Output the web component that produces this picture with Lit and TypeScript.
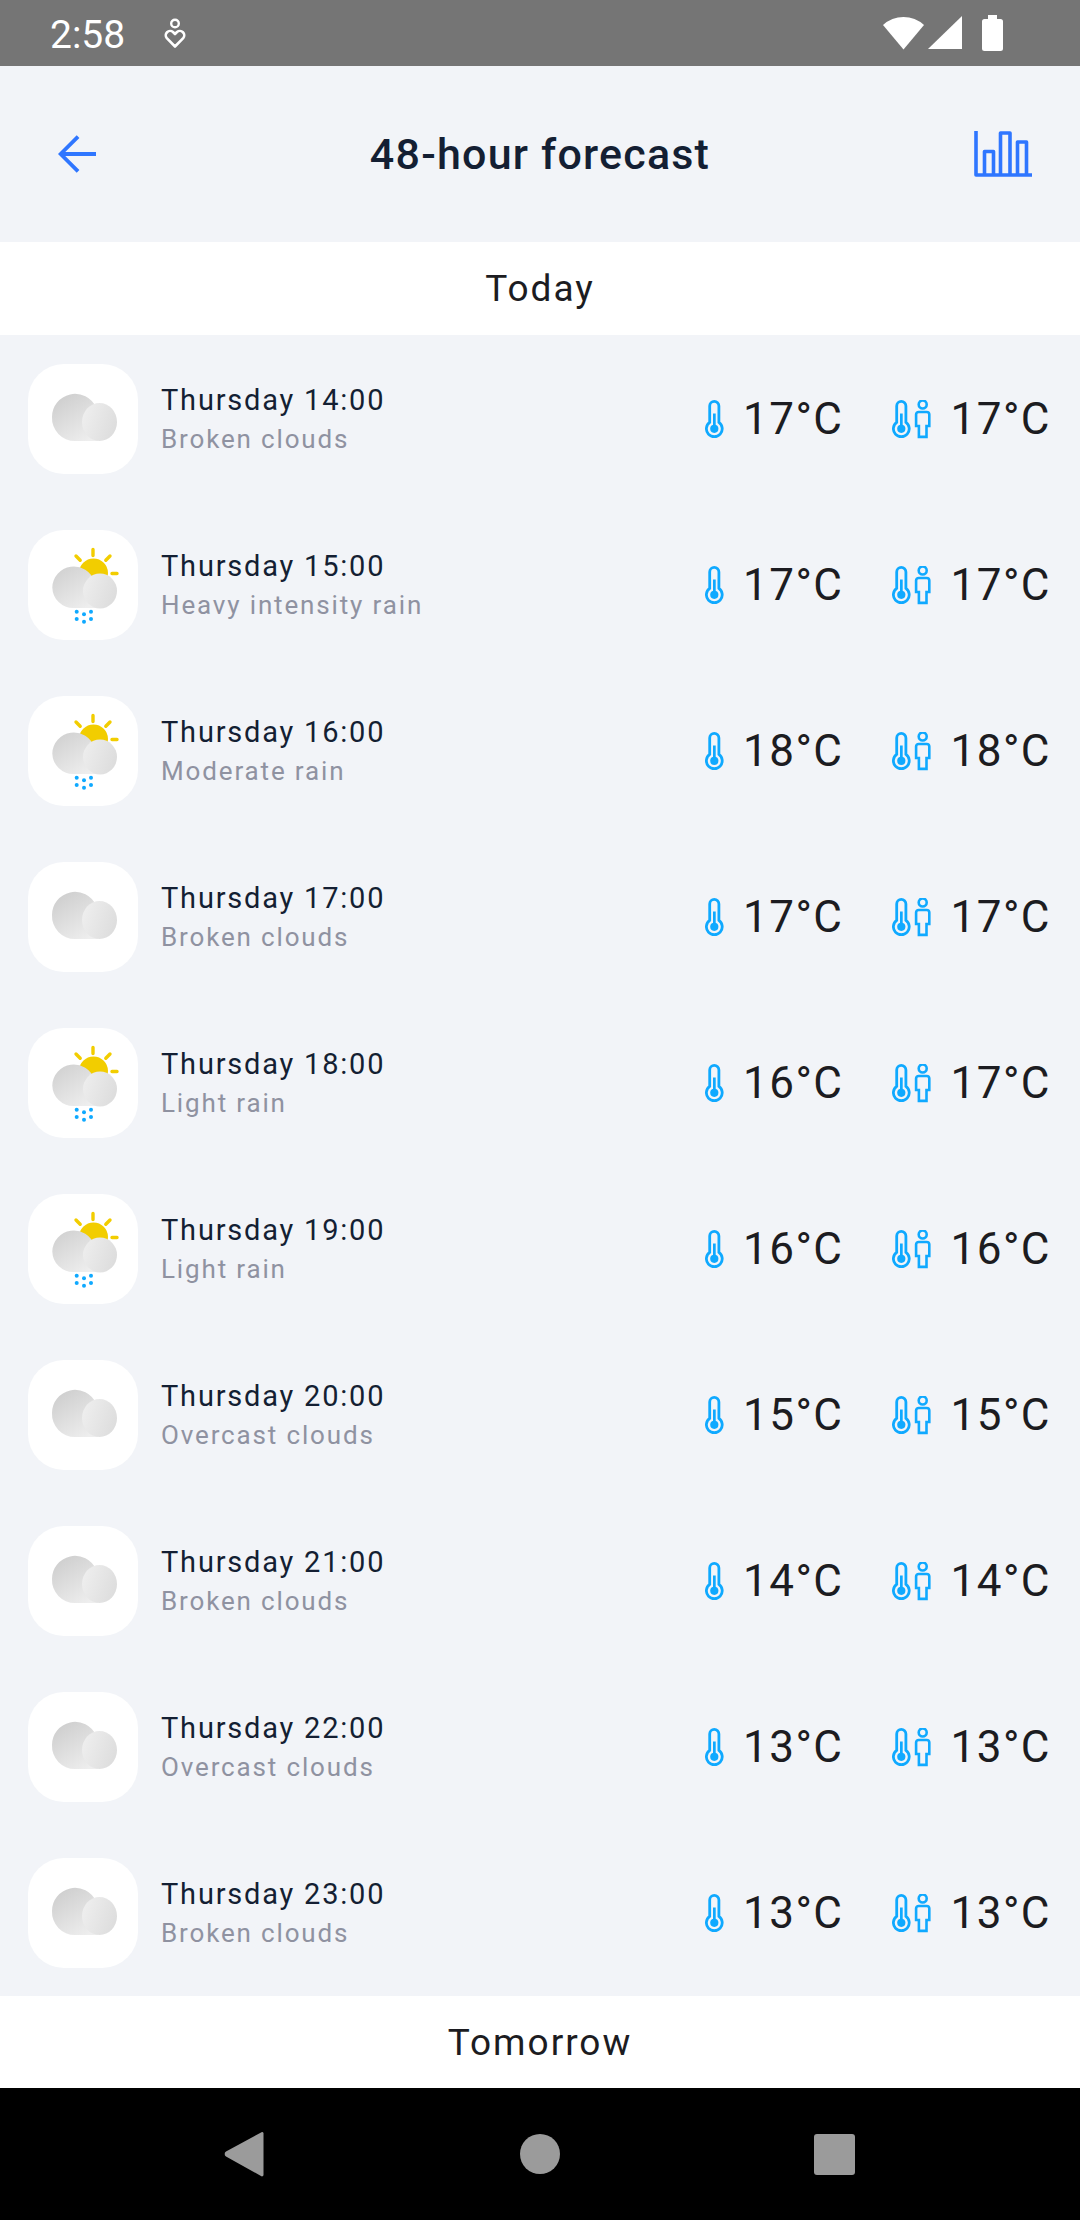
import { css, html, svg, LitElement } from 'lit';
import { customElement } from 'lit/decorators.js';

type Hour = {
  time: string;
  label: string;
  temp: number;
  feels: number;
  rain?: boolean;
};

const HOURS: Hour[] = [
  { time: '14:00', label: 'Broken clouds', temp: 17, feels: 17 },
  { time: '15:00', label: 'Heavy intensity rain', temp: 17, feels: 17, rain: true },
  { time: '16:00', label: 'Moderate rain', temp: 18, feels: 18, rain: true },
  { time: '17:00', label: 'Broken clouds', temp: 17, feels: 17 },
  { time: '18:00', label: 'Light rain', temp: 16, feels: 17, rain: true },
  { time: '19:00', label: 'Light rain', temp: 16, feels: 16, rain: true },
  { time: '20:00', label: 'Overcast clouds', temp: 15, feels: 15 },
  { time: '21:00', label: 'Broken clouds', temp: 14, feels: 14 },
  { time: '22:00', label: 'Overcast clouds', temp: 13, feels: 13 },
  { time: '23:00', label: 'Broken clouds', temp: 13, feels: 13 },
];

const cloudIcon = html`<svg class="weather" viewBox="0 0 110 110">
  <defs>
    <linearGradient id="cloud-a" gradientUnits="userSpaceOnUse" x1="30" y1="35" x2="58" y2="78">
      <stop offset="0" stop-color="#cfcfcf" />
      <stop offset="1" stop-color="#eeeeee" />
    </linearGradient>
    <linearGradient id="cloud-b" gradientUnits="userSpaceOnUse" x1="55" y1="50" x2="89" y2="62">
      <stop offset="0" stop-color="#eeeeee" />
      <stop offset="1" stop-color="#dddddd" />
    </linearGradient>
  </defs>
  <path
    fill="url(#cloud-a)"
    d="M24 53a23 23 0 0 1 44-9.500h2v33.500H47a23 23 0 0 1-23-24z"
  />
  <ellipse cx="71.500" cy="58" rx="17.500" ry="19" fill="url(#cloud-b)" />
</svg>`;

const rainIcon = html`<svg class="weather" viewBox="0 0 110 110">
  <g stroke="#f2cd00" stroke-width="3.400" stroke-linecap="round">
    <path d="M65 19.500v6M48 26l4.200 4.200M82 26l-4.200 4.200M84 43.500h5" />
  </g>
  <circle cx="65.500" cy="43" r="14.500" fill="#f2cd00" />
  <path
    fill="url(#cloud-a)"
    d="M24.300 57.500a21.500 21.500 0 0 1 42-6h4v26.500H45.300a21 21 0 0 1-21-20.500z"
  />
  <ellipse cx="72" cy="61" rx="17" ry="17.500" fill="url(#cloud-b)" />
  <g fill="#0fa9ff">
    <circle cx="48.700" cy="81.700" r="2" />
    <circle cx="48.700" cy="89" r="2" />
    <circle cx="56" cy="84.300" r="2" />
    <circle cx="56" cy="91.700" r="2" />
    <circle cx="63" cy="81.700" r="2" />
    <circle cx="63" cy="89" r="2" />
  </g>
</svg>`;

const thermoPaths = svg`
  <path
    fill="none"
    stroke="#0fa9ff"
    stroke-width="2.800"
    d="M4.700 22.400V6a4.600 4.600 0 0 1 9.200 0v16.400a7.900 7.900 0 1 1-9.200 0z"
  />
  <rect x="8" y="13.500" width="2.700" height="15" fill="#0fa9ff" />
  <circle cx="9.300" cy="28.800" r="4.100" fill="#0fa9ff" />
`;

const thermoIcon = html`<svg class="thermo" viewBox="0 0 19 39">
  ${thermoPaths}
</svg>`;

const feelsIcon = html`<svg class="feels" viewBox="0 0 39 39">
  ${thermoPaths}
  <circle cx="30.700" cy="4.500" r="4" fill="none" stroke="#0fa9ff" stroke-width="2.600" />
  <path
    fill="none"
    stroke="#0fa9ff"
    stroke-width="2.600"
    d="M26.700 12h8a2.600 2.600 0 0 1 2.600 2.600v11.400h-2.800v10.900h-7.600V26h-2.800V14.600a2.600 2.600 0 0 1 2.600-2.600z"
  />
</svg>`;

@customElement('app-root')
export class AppRoot extends LitElement {
  static styles = css`
    :host {
      background: #f2f4f8;
      display: flex;
      flex-direction: column;
      font-family: Roboto, 'Noto Sans', sans-serif;
      height: 2220px;
      overflow: hidden;
    }

    .status-bar {
      align-items: center;
      background: #757575;
      color: #fff;
      display: flex;
      flex: none;
      font-size: 39px;
      height: 66px;
      padding: 0 0 0 50px;
    }

    .status-bar .time {
      line-height: 66px;
      padding-top: 3px;
      width: 114px;
    }

    .status-bar .right {
      display: flex;
      margin-left: auto;
    }

    .status-bar svg {
      display: block;
    }

    .header {
      align-items: center;
      display: grid;
      flex: none;
      grid-template-columns: 1fr auto 1fr;
      height: 176px;
      padding: 0 48px;
    }

    .header svg {
      display: block;
    }

    .header .back {
      margin-left: 10px;
    }

    .header .chart {
      justify-self: end;
    }

    h1 {
      color: #141f33;
      font-size: 43px;
      font-weight: 500;
      letter-spacing: 1.200px;
      margin: 0;
    }

    .section {
      align-items: center;
      background: #fff;
      color: #1c1c21;
      display: flex;
      flex: none;
      font-size: 37px;
      height: 93px;
      justify-content: center;
      letter-spacing: 2px;
    }

    .section.last {
      height: 92px;
    }

    .list {
      display: flex;
      flex: none;
      flex-direction: column;
      gap: 56px;
      padding: 29px 0 28px;
    }

    .row {
      align-items: center;
      display: flex;
      height: 110px;
      padding: 0 29px 0 28px;
    }

    .tile {
      background: #fff;
      border-radius: 36px;
      flex: none;
      height: 110px;
      width: 110px;
    }

    .weather {
      display: block;
      height: 110px;
      width: 110px;
    }

    .text {
      display: flex;
      flex: 1;
      flex-direction: column;
      gap: 4px;
      margin-left: 23px;
      padding-top: 1px;
    }

    .when {
      color: #141f33;
      font-size: 29px;
      letter-spacing: 1.800px;
      line-height: 36px;
    }

    .what {
      color: #8f92a1;
      font-size: 26px;
      letter-spacing: 1.850px;
      line-height: 36px;
      margin-top: -1px;
    }

    .temp {
      align-items: center;
      color: #1c1c21;
      display: flex;
      font-size: 44px;
      letter-spacing: 1.500px;
    }

    .temp svg {
      display: block;
      flex: none;
    }

    .thermo {
      height: 39px;
      margin-right: 19px;
      width: 19px;
    }

    .feels {
      height: 39px;
      margin-left: 49px;
      margin-right: 19px;
      width: 39px;
    }

    .nav {
      align-items: center;
      background: #000;
      display: flex;
      flex: none;
      height: 132px;
      justify-content: center;
    }

    .nav svg {
      display: block;
    }
  `;

  renderRow(hour: Hour) {
    return html`<div class="row">
      <div class="tile">${hour.rain ? rainIcon : cloudIcon}</div>
      <div class="text">
        <div class="when">Thursday ${hour.time}</div>
        <div class="what">${hour.label}</div>
      </div>
      <div class="temp">${thermoIcon}<span>${hour.temp}°C</span></div>
      <div class="temp">${feelsIcon}<span>${hour.feels}°C</span></div>
    </div>`;
  }

  render() {
    return html`
      <div class="status-bar">
        <span class="time">2:58</span>
        <svg width="22" height="32" viewBox="0 0 22 32">
          <circle cx="11" cy="6.500" r="3.800" fill="none" stroke="#fff" stroke-width="2.400" />
          <path
            fill="none"
            stroke="#fff"
            stroke-width="2.600"
            stroke-linejoin="round"
            d="M11 29.500 2.800 21.200a4.400 4.400 0 0 1 6.200-6.200l2 2 2-2a4.400 4.400 0 0 1 6.200 6.200z"
          />
        </svg>
        <svg class="right" width="197" height="66" viewBox="883 0 197 66">
          <path fill="#fff" d="M883 25a30 30 0 0 1 41 0l-20.500 24.500z" />
          <path fill="#fff" d="M962 16v33h-34z" />
          <path
            fill="#fff"
            d="M988 15h9v4h3.500a2.500 2.500 0 0 1 2.500 2.500v27a2.500 2.500 0 0 1-2.500 2.500h-16a2.500 2.500 0 0 1-2.500-2.500v-27a2.500 2.500 0 0 1 2.500-2.500h3.500z"
          />
        </svg>
      </div>

      <div class="header">
        <svg class="back" width="38" height="38" viewBox="0 0 36 36">
          <path
            fill="none"
            stroke="#2f76ff"
            stroke-width="3.600"
            d="M36 18H3M19 1.500 2.500 18 19 34.500"
          />
        </svg>
        <h1>48-hour forecast</h1>
        <svg class="chart" width="58" height="46" viewBox="0 0 58 46">
          <path
            fill="none"
            stroke="#2f76ff"
            stroke-width="3.600"
            stroke-linejoin="round"
            d="M2 0v44h56M10.500 44V20.500h9V44M26.500 44V2h9.500v42M43.500 44V11h9v33"
          />
        </svg>
      </div>

      <div class="section">Today</div>
      <div class="list">${HOURS.map(hour => this.renderRow(hour))}</div>
      <div class="section last">Tomorrow</div>

      <div class="nav">
        <svg width="640" height="60" viewBox="220 2124 640 60">
          <path
            fill="#9b9b9b"
            d="M262 2132a1.500 1.500 0 0 1 1.500 1v42a1.500 1.500 0 0 1-2.500 1l-35-19.500a3 3 0 0 1 0-5z"
          />
          <circle cx="540" cy="2154" r="20" fill="#9b9b9b" />
          <rect x="814" y="2134" width="41" height="41" rx="3" fill="#9b9b9b" />
        </svg>
      </div>
    `;
  }
}
